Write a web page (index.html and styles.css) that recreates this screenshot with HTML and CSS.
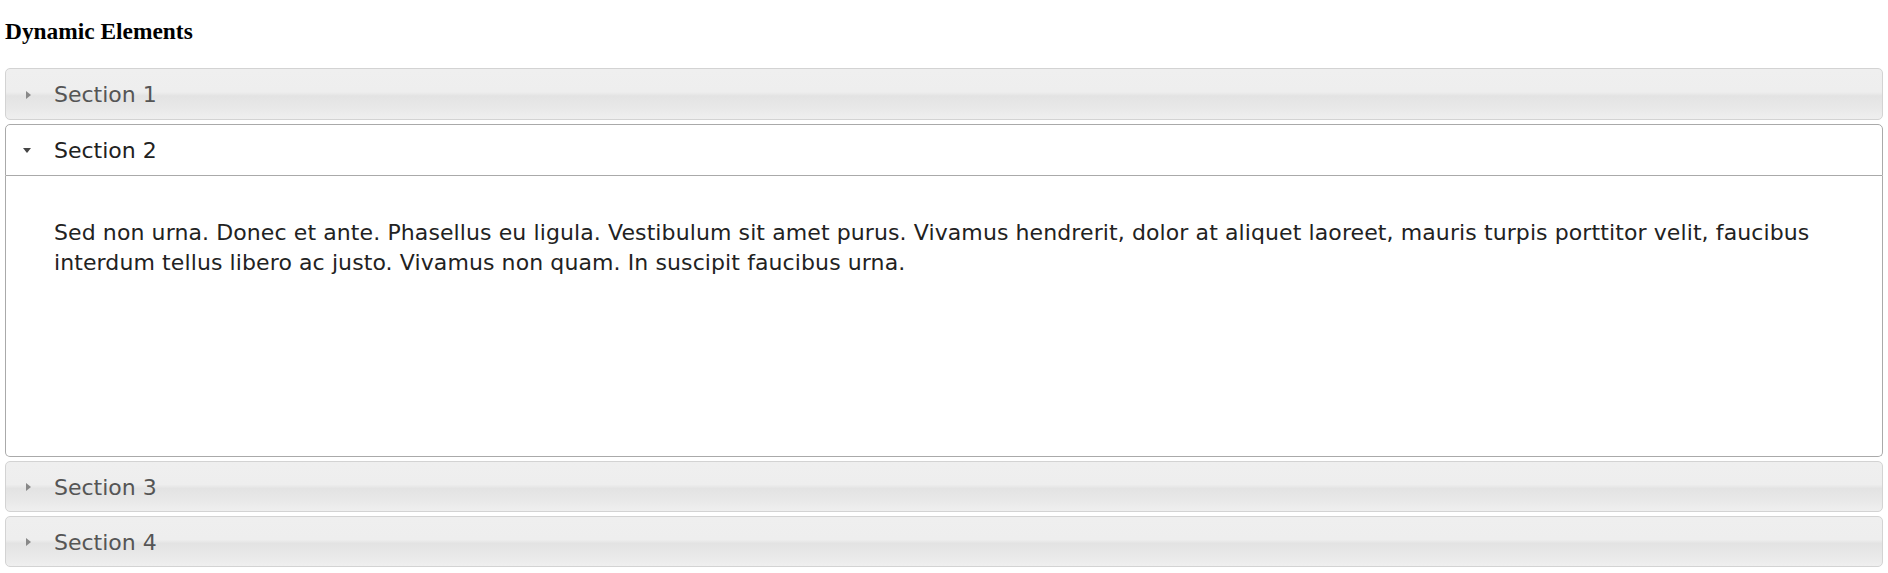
FILE: index.html
```html
<!DOCTYPE html>
<html>
<head>
<meta charset="utf-8">
<title>Dynamic Elements</title>
<link rel="stylesheet" href="styles.css">
</head>
<body>
<h3 class="title">Dynamic Elements</h3>
<div class="accordion">
  <div class="acc-header first">
    <span class="icon icon-e"></span>
    <span class="acc-label">Section 1</span>
  </div>
  <div class="acc-header active">
    <span class="icon icon-s"></span>
    <span class="acc-label">Section 2</span>
  </div>
  <div class="acc-content">
    <p>Sed non urna. Donec et ante. Phasellus eu ligula. Vestibulum sit amet purus. Vivamus hendrerit, dolor at aliquet laoreet, mauris turpis porttitor velit, faucibus interdum tellus libero ac justo. Vivamus non quam. In suscipit faucibus urna.</p>
  </div>
  <div class="acc-header">
    <span class="icon icon-e"></span>
    <span class="acc-label">Section 3</span>
  </div>
  <div class="acc-header">
    <span class="icon icon-e"></span>
    <span class="acc-label">Section 4</span>
  </div>
</div>
</body>
</html>
```
FILE: styles.css
```css
html, body {
  margin: 0;
  padding: 0;
  background: #ffffff;
}
body {
  padding: 0 5px;
}
.title {
  font-family: "Liberation Serif", "Times New Roman", serif;
  font-weight: bold;
  font-size: 23.4px;
  line-height: 26px;
  margin: 18px 0 24px 0;
  color: #000;
}
.accordion {
  font-family: "DejaVu Sans", Verdana, sans-serif;
  font-size: 22px;
  display: flex;
  flex-direction: column;
  gap: 4px;
}
.acc-header {
  display: flex;
  align-items: center;
  height: 51px;
  box-sizing: border-box;
  padding: 1px 11px 0 0;
  border: 1px solid #d3d3d3;
  border-radius: 5px;
  color: #555555;
  background: linear-gradient(to bottom, #efefef 0%, #eeeeee 46%, #e3e3e3 54%, #e9e9e9 80%, #efefef 100%);
  cursor: pointer;
}
.acc-header.first {
  height: 52px;
}
.acc-header.active {
  border-color: #aaaaaa;
  background: #ffffff;
  color: #212121;
  border-radius: 5px 5px 0 0;
  height: 52px;
}
.icon {
  width: 48px;
  display: flex;
  justify-content: center;
  align-items: center;
  flex: none;
}
.icon::before {
  content: "";
  display: block;
  width: 0;
  height: 0;
  border-style: solid;
}
.icon-e::before {
  border-width: 4px 0 4px 5px;
  border-color: transparent transparent transparent #888888;
  margin-left: -4px;
}
.icon-s::before {
  border-width: 5px 4px 0 4px;
  border-color: #454545 transparent transparent transparent;
  margin-left: -6px;
}
.acc-label {
  line-height: 27px;
}
.acc-content {
  margin-top: -4px;
  border: 1px solid #aaaaaa;
  border-top: 0;
  border-radius: 0 0 5px 5px;
  box-sizing: border-box;
  height: 281px;
  padding: 42px 48px 22px 48px;
  color: #222222;
  background: #ffffff;
}
.acc-content p {
  margin: 0;
  line-height: 30px;
  letter-spacing: 0.1px;
}
```
